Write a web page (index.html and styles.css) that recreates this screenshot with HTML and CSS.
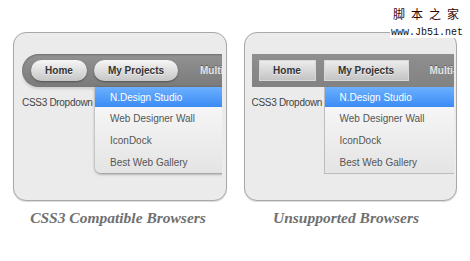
FILE: index.html
```html
<!DOCTYPE html>
<html lang="en">
<head>
<meta charset="utf-8">
<title>CSS3 Dropdown Menu</title>
<link rel="stylesheet" href="styles.css">
</head>
<body>
<div class="stage">
  <div class="panel">
    <div class="card">
      <div class="view">
        <div class="bar bar-round">
          <span class="btn btn-round btn-home">Home</span>
          <span class="btn btn-round btn-proj">My Projects</span>
          <span class="more">Multi-level</span>
        </div>
        <p class="intro">CSS3 Dropdown Menu</p>
        <ul class="menu menu-round">
          <li class="item active first">N.Design Studio</li>
          <li class="item">Web Designer Wall</li>
          <li class="item">IconDock</li>
          <li class="item">Best Web Gallery</li>
        </ul>
      </div>
    </div>
    <div class="caption">CSS3 Compatible Browsers</div>
  </div>
  <div class="panel">
    <div class="card card-right">
      <div class="view view-right">
        <div class="bar bar-flat">
          <span class="btn btn-flat btn-home">Home</span>
          <span class="btn btn-flat btn-proj">My Projects</span>
          <span class="more">Multi-level</span>
        </div>
        <p class="intro">CSS3 Dropdown Menu</p>
        <ul class="menu menu-flat">
          <li class="item active first">N.Design Studio</li>
          <li class="item">Web Designer Wall</li>
          <li class="item">IconDock</li>
          <li class="item">Best Web Gallery</li>
        </ul>
      </div>
    </div>
    <div class="caption caption-right">Unsupported Browsers</div>
  </div>
</div>
<div class="watermark">
  <div class="wm-cn">脚本之家</div>
  <div class="wm-url">www.Jb51.net</div>
</div>
</body>
</html>
```
FILE: styles.css
```css
html, body {
  margin: 0;
  padding: 0;
}
body {
  width: 470px;
  height: 261px;
  background: #fff;
  font-family: "Liberation Sans", Arial, sans-serif;
  position: relative;
  overflow: hidden;
}
.stage {
  display: flex;
  gap: 16px;
  padding: 32px 0 0 13px;
}
.panel {
  width: 214px;
  display: flex;
  flex-direction: column;
  align-items: center;
}
.card {
  width: 214px;
  height: 169px;
  box-sizing: border-box;
  border: 1px solid #a8a8a8;
  border-radius: 13px;
  background: #ebebeb;
  padding: 21px 0 0 8px;
  box-shadow: 0 1px 1px rgba(0,0,0,0.15);
}
.card-right {
  width: 213px;
  padding-left: 7px;
}
.view {
  width: 200px;
  height: 130px;
  overflow: hidden;
  position: relative;
}
.view-right {
  width: 202px;
}
.bar {
  height: 33px;
  width: 280px;
  box-sizing: border-box;
  display: flex;
  align-items: center;
  background: linear-gradient(#939393, #7a7a7a);
}
.bar-round {
  border-radius: 17px 0 0 17px;
  padding-left: 9px;
  gap: 7px;
  box-shadow: 0 2px 3px rgba(0,0,0,0.12), inset 0 1px 2px rgba(0,0,0,0.25);
}
.bar-flat {
  padding-left: 7px;
  gap: 8px;
  background: linear-gradient(#8f8f8f, #828282);
}
.btn {
  height: 21px;
  box-sizing: border-box;
  display: flex;
  align-items: center;
  justify-content: center;
  font-size: 10px;
  font-weight: bold;
  color: #333;
  text-shadow: 0 1px 0 rgba(255,255,255,0.7);
}
.btn-round {
  border-radius: 11px;
  background: linear-gradient(#f6f6f6, #c6c6c6);
  box-shadow: 0 1px 2px rgba(0,0,0,0.35);
}
.btn-flat {
  border: 1px solid #d8d8d8;
  background: linear-gradient(#ececec, #c4c4c4);
}
.btn-round.btn-home { width: 56px; }
.btn-round.btn-proj { width: 84px; }
.btn-flat.btn-home { width: 57px; }
.btn-flat.btn-proj { width: 85px; }
.more {
  margin-left: 15px;
  font-size: 10px;
  font-weight: bold;
  color: #e6e6e6;
  text-shadow: 0 -1px 0 rgba(0,0,0,0.35);
  white-space: nowrap;
}
.bar-flat .more { margin-left: 13px; }
.intro {
  margin: 10px 0 0 0;
  font-size: 10px;
  line-height: 12px;
  color: #444;
  letter-spacing: -0.3px;
  white-space: nowrap;
}
.menu {
  position: absolute;
  top: 33px;
  left: 73px;
  width: 170px;
  margin: 0;
  padding: 0;
  list-style: none;
  background: linear-gradient(#fbfbfb, #e4e4e4);
}
.menu-round {
  border-radius: 0 0 0 6px;
  box-shadow: 0 1px 3px rgba(0,0,0,0.45);
}
.menu-flat {
  left: 72px;
  border: 1px solid #bcbcbc;
  border-top: 0;
}
.item {
  height: 22px;
  display: flex;
  align-items: center;
  padding-left: 15px;
  font-size: 10px;
  color: #555;
  white-space: nowrap;
}
.item.first {
  height: 20px;
}
.item.active {
  color: #fff;
  background: linear-gradient(#6cb0ff, #3b8bf5);
}
.caption {
  margin-top: 8px;
  font-family: "Liberation Serif", "Times New Roman", serif;
  font-style: italic;
  font-weight: bold;
  font-size: 15.5px;
  line-height: 18px;
  color: #707070;
  white-space: nowrap;
  margin-right: 4px;
}
.caption-right {
  margin-right: 8px;
}
.watermark {
  position: absolute;
  top: 0;
  left: 390px;
  width: 78px;
  height: 38px;
  background: #fff;
}
.wm-cn {
  margin: 7px 0 0 3px;
  font-family: "Noto Sans CJK SC", sans-serif;
  font-size: 12px;
  line-height: 14px;
  letter-spacing: 6px;
  color: #3a0000;
  white-space: nowrap;
}
.wm-url {
  margin: 6px 0 0 1px;
  font-family: "Liberation Mono", "Courier New", monospace;
  font-size: 10px;
  line-height: 12px;
  color: #111;
  white-space: nowrap;
}
```
